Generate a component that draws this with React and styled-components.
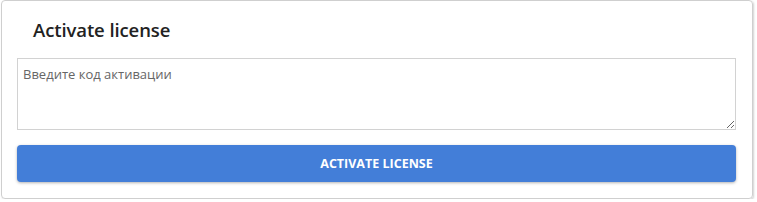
import styled, { createGlobalStyle } from 'styled-components';

const GlobalStyle = createGlobalStyle`
  body {
    margin: 0;
    background: #fff;
    font-family: "Open Sans", "Liberation Sans", sans-serif;
  }
`;

const Card = styled.section`
  box-sizing: border-box;
  width: 752px;
  height: 199px;
  margin-left: 1px;
  border: 1px solid #cfcfcf;
  border-radius: 4px;
  box-shadow: 1px 1px 2px rgba(0, 0, 0, 0.18);
  padding: 0 15px 16px;
  display: flex;
  flex-direction: column;
`;

const Title = styled.h2`
  margin: 0;
  height: 57px;
  display: flex;
  align-items: center;
  padding-left: 16px;
  font-size: 18.5px;
  font-weight: 600;
  color: #222;
  letter-spacing: -0.1px;
`;

const CodeInput = styled.textarea`
  box-sizing: border-box;
  width: 719px;
  height: 72px;
  margin: 0;
  padding: 6px 5px;
  border: 1px solid #d2d2d2;
  border-radius: 0;
  font-family: inherit;
  font-size: 13px;
  color: #333;
  resize: vertical;
  outline: none;
  &::placeholder {
    color: #666;
  }
`;

const ActivateButton = styled.button`
  margin-top: 15px;
  height: 37px;
  width: 719px;
  border: none;
  border-radius: 4px;
  background-color: #437ed8;
  color: #fff;
  font-family: inherit;
  font-size: 12.5px;
  font-weight: 700;
  letter-spacing: 0;
  box-shadow: 0 1px 3px rgba(0, 0, 0, 0.3);
  cursor: pointer;
`;

export default function App() {
  return (
    <>
      <GlobalStyle />
      <Card>
        <Title>Activate license</Title>
        <CodeInput placeholder="Введите код активации" />
        <ActivateButton>ACTIVATE LICENSE</ActivateButton>
      </Card>
    </>
  );
}
